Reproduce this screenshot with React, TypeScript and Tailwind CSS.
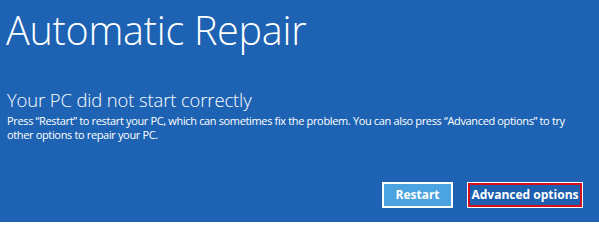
export default function App() {
  return (
    <div className="w-[599px] h-[222px] bg-[#1e63b3] text-white overflow-hidden flex flex-col" style={{ fontFamily: '"Open Sans", "Noto Sans", sans-serif' }}>
      <h1 className="pl-[6px] pt-[6px] text-[39.5px] font-light leading-[48px] tracking-[-0.25px] whitespace-nowrap">Automatic Repair</h1>
      <div className="pl-[7px] mt-[35px]">
        <h2 className="text-[18.4px] font-light leading-[22px] tracking-[-0.1px] whitespace-nowrap">Your PC did not start correctly</h2>
        <p className="mt-[3px] text-[11px] leading-[14px] tracking-[-0.35px] whitespace-nowrap">
          Press “Restart” to restart your PC, which can sometimes fix the problem. You can also press “Advanced options” to try
          <br />
          other options to repair your PC.
        </p>
      </div>
      <div className="mt-auto mb-[14px] mr-[16px] flex justify-end gap-[14px]">
        <button className="w-[71px] h-[26px] border-2 border-white bg-[#4ba3df] text-[12px] font-bold text-white leading-none">Restart</button>
        <button className="w-[116px] h-[26px] border border-white p-0">
          <span className="flex h-full w-full items-center justify-center border-2 border-[#d4101e] bg-[#1d60b0] text-[12px] font-bold text-white leading-none">Advanced options</span>
        </button>
      </div>
    </div>
  );
}
